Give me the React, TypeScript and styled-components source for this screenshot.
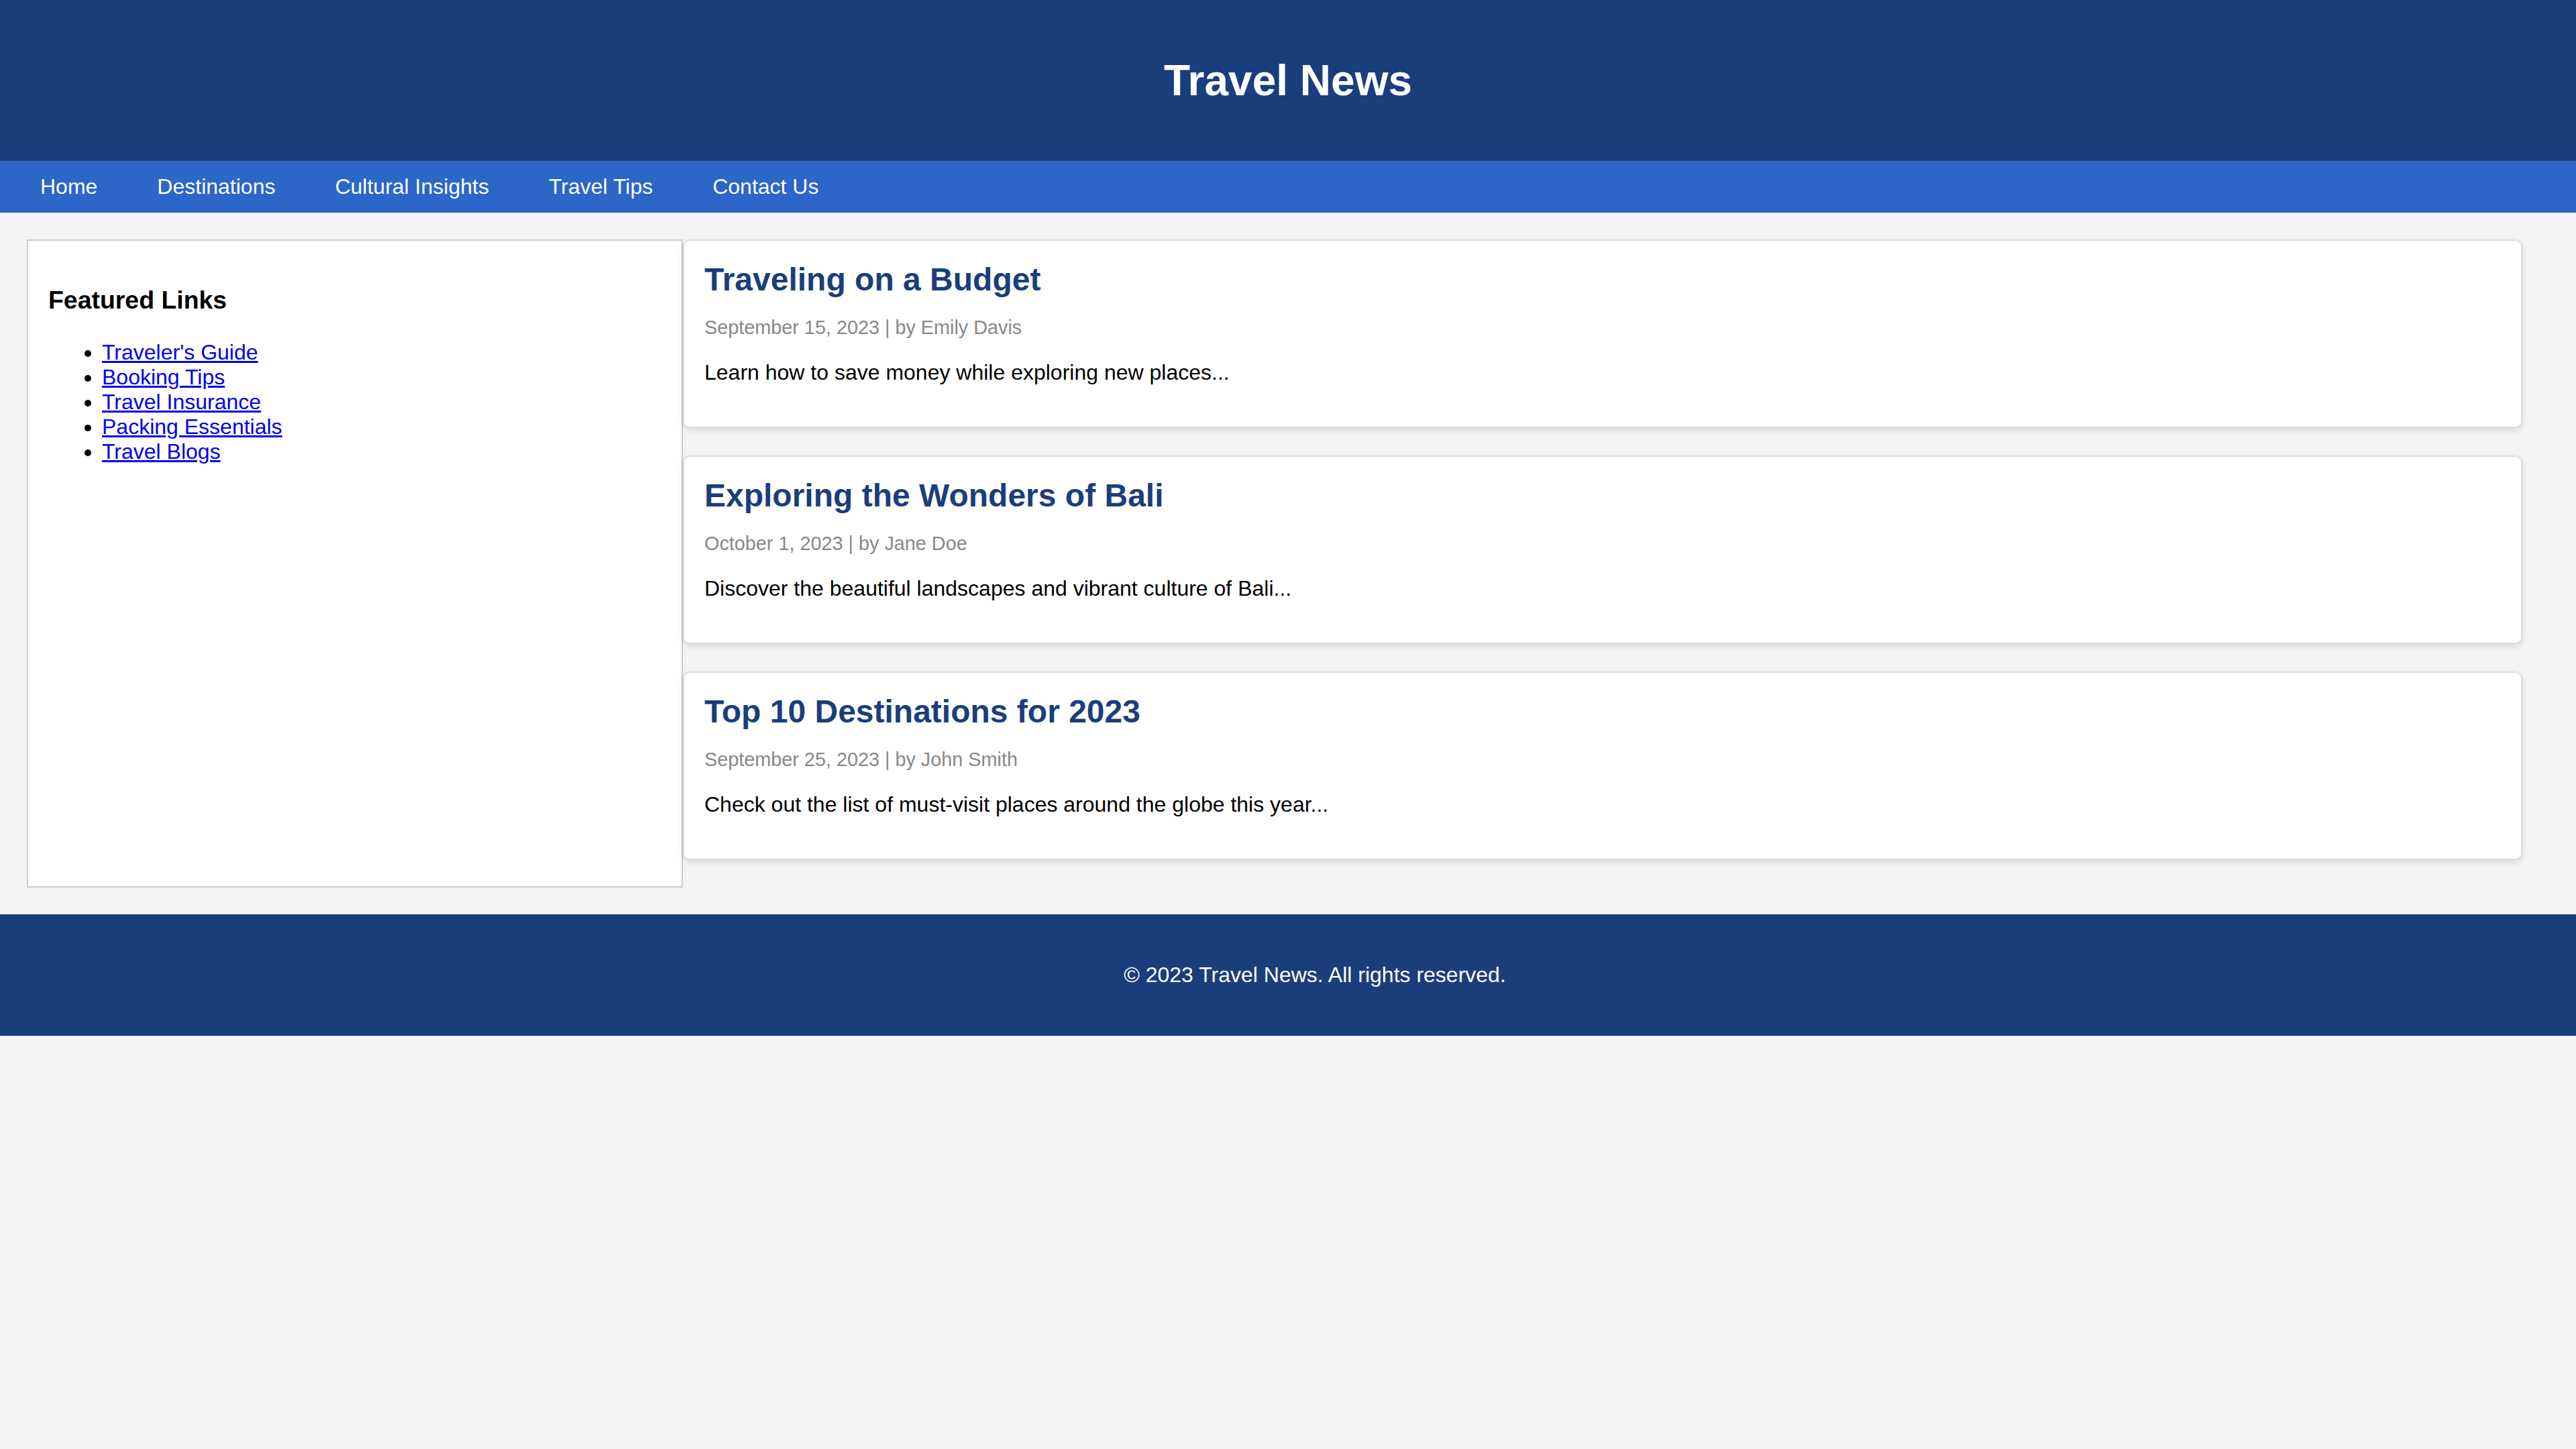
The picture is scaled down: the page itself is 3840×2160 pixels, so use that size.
import React from "react";
import styled, { createGlobalStyle } from "styled-components";

const GlobalStyle = createGlobalStyle`
  html, body {
    margin: 0;
    padding: 0;
    background: #f4f4f4;
    font-family: "Liberation Sans", Arial, Helvetica, sans-serif;
    font-size: 32px;
    overflow-x: hidden;
  }
`;

const Header = styled.header`
  background: #1a3e7c;
  color: #ffffff;
  text-align: center;
  padding: 40px;
`;

const Title = styled.h1`
  font-size: 64px;
  font-weight: bold;
  margin: 42.88px 0;
`;

const Nav = styled.nav`
  background: #2c66c8;
  display: flex;
  gap: 89px;
  padding: 20px 60px;
`;

const NavLink = styled.a`
  color: #ffffff;
  text-decoration: none;
  font-size: 32px;
`;

const Main = styled.main`
  display: flex;
  align-items: stretch;
  padding: 40px;
`;

const Sidebar = styled.aside`
  flex: 1;
  background: #ffffff;
  border: 2px solid #cccccc;
  padding: 30px;
`;

const SidebarTitle = styled.h3`
  font-size: 37.44px;
  font-weight: bold;
  margin: 37.44px 0;
  color: #000000;
`;

const LinkList = styled.ul`
  margin: 32px 0;
  padding-left: 80px;
  list-style: disc;
`;

const LinkItem = styled.li`
  font-size: 32px;
  color: #000000;
`;

const SideLink = styled.a`
  color: #0000ee;
  text-decoration: underline;
`;

const Articles = styled.section`
  flex: 3;
  padding-right: 40px;
`;

const Card = styled.article`
  background: #ffffff;
  border: 2px solid #dddddd;
  border-radius: 10px;
  padding: 30px;
  margin-bottom: 41px;
  box-shadow: 0 4px 10px rgba(0, 0, 0, 0.1);
`;

const CardTitle = styled.h2`
  font-size: 48px;
  font-weight: bold;
  color: #1a3e7c;
  margin: 0;
`;

const Meta = styled.p`
  font-size: 28.8px;
  color: #888888;
  margin: 28px 0;
`;

const Summary = styled.p`
  font-size: 32px;
  color: #000000;
  margin: 32px 0;
`;

const Footer = styled.footer`
  box-sizing: content-box;
  width: 100%;
  background: #1a3e7c;
  color: #ffffff;
  text-align: center;
  padding: 40px;
`;

const FooterText = styled.p`
  margin: 32px 0;
  font-size: 32px;
`;

const navItems = ["Home", "Destinations", "Cultural Insights", "Travel Tips", "Contact Us"];

const featured = [
  "Traveler's Guide",
  "Booking Tips",
  "Travel Insurance",
  "Packing Essentials",
  "Travel Blogs",
];

const articles = [
  {
    title: "Traveling on a Budget",
    meta: "September 15, 2023 | by Emily Davis",
    summary: "Learn how to save money while exploring new places...",
  },
  {
    title: "Exploring the Wonders of Bali",
    meta: "October 1, 2023 | by Jane Doe",
    summary: "Discover the beautiful landscapes and vibrant culture of Bali...",
  },
  {
    title: "Top 10 Destinations for 2023",
    meta: "September 25, 2023 | by John Smith",
    summary: "Check out the list of must-visit places around the globe this year...",
  },
];

export default function App() {
  return (
    <>
      <GlobalStyle />
      <Header>
        <Title>Travel News</Title>
      </Header>
      <Nav>
        {navItems.map((item) => (
          <NavLink key={item} href="#">
            {item}
          </NavLink>
        ))}
      </Nav>
      <Main>
        <Sidebar>
          <SidebarTitle>Featured Links</SidebarTitle>
          <LinkList>
            {featured.map((f) => (
              <LinkItem key={f}>
                <SideLink href="#">{f}</SideLink>
              </LinkItem>
            ))}
          </LinkList>
        </Sidebar>
        <Articles>
          {articles.map((a) => (
            <Card key={a.title}>
              <CardTitle>{a.title}</CardTitle>
              <Meta>{a.meta}</Meta>
              <Summary>{a.summary}</Summary>
            </Card>
          ))}
        </Articles>
      </Main>
      <Footer>
        <FooterText>© 2023 Travel News. All rights reserved.</FooterText>
      </Footer>
    </>
  );
}
